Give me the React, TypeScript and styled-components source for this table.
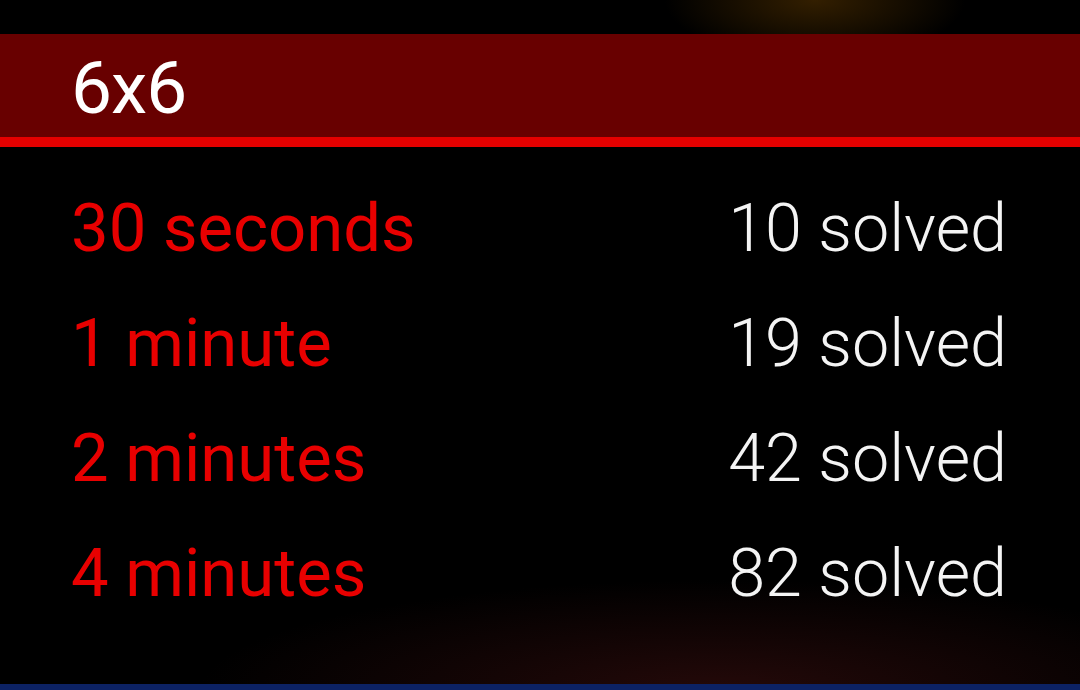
import styled, { createGlobalStyle } from "styled-components";

const GlobalStyle = createGlobalStyle`
  html, body {
    margin: 0;
    padding: 0;
    background: #000;
  }
  body {
    font-family: Roboto, "Noto Sans", sans-serif;
  }
`;

const Screen = styled.div`
  display: flex;
  flex-direction: column;
  height: 100vh;
  min-height: 690px;
  padding-top: 34px;
  box-sizing: border-box;
  background:
    radial-gradient(ellipse 150px 60px at 815px 0px, rgba(60, 36, 0, 0.85), rgba(0, 0, 0, 0) 100%),
    radial-gradient(ellipse 520px 110px at 720px 690px, rgba(40, 10, 10, 0.9), rgba(0, 0, 0, 0) 100%),
    #000;
  overflow: hidden;
`;

const Header = styled.div`
  height: 103px;
  padding-left: 71px;
  background: #680000;
  border-bottom: 10px solid #e40000;
  color: #fff;
  font-size: 73px;
  line-height: 109px;
  letter-spacing: -1px;
`;

const List = styled.div`
  display: flex;
  flex-direction: column;
  padding: 24px 73px 0 71px;
`;

const Row = styled.div`
  display: flex;
  justify-content: space-between;
  align-items: baseline;
  height: 115px;
  line-height: 115px;
`;

const Duration = styled.span`
  color: #e80000;
  font-size: 67px;
  font-weight: 400;
`;

const Solved = styled.span`
  color: #f4f4f4;
  font-size: 66.5px;
  font-weight: 300;
`;

const BottomBar = styled.div`
  margin-top: auto;
  height: 6px;
  background: #0c2264;
`;

const results = [
  { label: "30 seconds", solved: 10 },
  { label: "1 minute", solved: 19 },
  { label: "2 minutes", solved: 42 },
  { label: "4 minutes", solved: 82 },
];

export default function App() {
  return (
    <>
      <GlobalStyle />
      <Screen>
        <Header>6x6</Header>
        <List>
          {results.map((r) => (
            <Row key={r.label}>
              <Duration>{r.label}</Duration>
              <Solved>{r.solved} solved</Solved>
            </Row>
          ))}
        </List>
        <BottomBar />
      </Screen>
    </>
  );
}
